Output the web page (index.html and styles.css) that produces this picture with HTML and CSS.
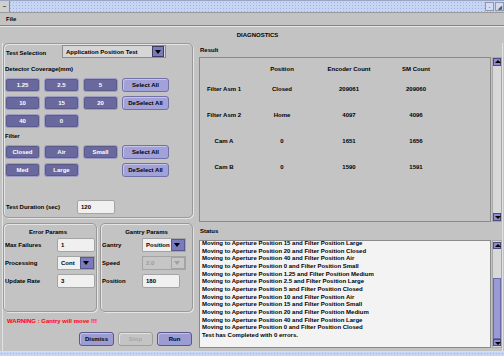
FILE: index.html
```html
<!DOCTYPE html>
<html lang="en">
<head>
  <meta charset="UTF-8">
  <title>Diagnostics</title>
  <link rel="stylesheet" href="styles.css">
</head>
<body>

  <div class="window">
    <div class="titlebar">
      <div class="tb-menu">–</div>
      <div class="tb-fill"></div>
      <div class="tb-btn">·</div>
      <div class="tb-btn">◢</div>
    </div>
    <div class="menubar"><span>File</span></div>
    <div class="heading">DIAGNOSTICS</div>

    <div class="main">
      <div class="left">
        <div class="panel tests">
          <div class="sel-row">
            <label>Test Selection</label>
            <div class="combo wide"><span>Application Position Test</span><i class="drop"></i></div>
          </div>

          <div class="group-title">Detector Coverage(mm)</div>
          <div class="btn-grid">
            <button class="btn">1.25</button>
            <button class="btn">2.5</button>
            <button class="btn">5</button>
            <button class="btn light">Select All</button>
            <button class="btn">10</button>
            <button class="btn">15</button>
            <button class="btn">20</button>
            <button class="btn light">DeSelect All</button>
            <button class="btn">40</button>
            <button class="btn">0</button>
          </div>

          <div class="group-title">Filter</div>
          <div class="btn-grid">
            <button class="btn">Closed</button>
            <button class="btn">Air</button>
            <button class="btn">Small</button>
            <button class="btn light">Select All</button>
            <button class="btn">Med</button>
            <button class="btn">Large</button>
            <button class="btn light col4">DeSelect All</button>
          </div>

          <div class="duration-row">
            <label>Test Duration (sec)</label>
            <input class="field" type="text" value="120">
          </div>
        </div>

        <div class="params-row">
          <div class="panel param-box error">
            <div class="param-title">Error Params</div>
            <div class="prow"><label>Max Failures</label><input class="field" type="text" value="1"></div>
            <div class="prow"><label>Processing</label><div class="combo small"><span>Cont</span><i class="drop"></i></div></div>
            <div class="prow"><label>Update Rate</label><input class="field" type="text" value="3"></div>
          </div>
          <div class="panel param-box gantry">
            <div class="param-title">Gantry Params</div>
            <div class="prow"><label>Gantry</label><div class="combo small"><span>Position</span><i class="drop"></i></div></div>
            <div class="prow"><label>Speed</label><div class="combo small disabled"><span>2.0</span><i class="drop"></i></div></div>
            <div class="prow"><label>Position</label><input class="field" type="text" value="180"></div>
          </div>
        </div>

        <div class="warning">WARNING : Gantry will move !!!</div>

        <div class="actions">
          <button class="btn action">Dismiss</button>
          <button class="btn action off">Stop</button>
          <button class="btn action">Run</button>
        </div>
      </div>

      <div class="right">
        <div class="section-title">Result</div>
        <div class="pane result-pane">
          <div class="table-view">
            <div class="trow head"><span></span><span>Position</span><span>Encoder Count</span><span>SM Count</span></div>
            <div class="trow"><span>Filter Asm 1</span><span>Closed</span><span>209061</span><span>209060</span></div>
            <div class="trow"><span>Filter Asm 2</span><span>Home</span><span>4097</span><span>4096</span></div>
            <div class="trow"><span>Cam A</span><span>0</span><span>1651</span><span>1656</span></div>
            <div class="trow"><span>Cam B</span><span>0</span><span>1590</span><span>1591</span></div>
          </div>
          <div class="vscroll">
            <div class="sarrow up"></div>
            <div class="sarrow down"></div>
          </div>
        </div>

        <div class="section-title status-title">Status</div>
        <div class="pane status-pane">
          <div class="log">
            <div class="log-lines">
              <div>Moving to Aperture Position 15 and Filter Position Large</div>
              <div>Moving to Aperture Position 20 and Filter Position Closed</div>
              <div>Moving to Aperture Position 40 and Filter Position Air</div>
              <div>Moving to Aperture Position 0 and Filter Position Small</div>
              <div>Moving to Aperture Position 1.25 and Filter Position Medium</div>
              <div>Moving to Aperture Position 2.5 and Filter Position Large</div>
              <div>Moving to Aperture Position 5 and Filter Position Closed</div>
              <div>Moving to Aperture Position 10 and Filter Position Air</div>
              <div>Moving to Aperture Position 15 and Filter Position Small</div>
              <div>Moving to Aperture Position 20 and Filter Position Medium</div>
              <div>Moving to Aperture Position 40 and Filter Position Large</div>
              <div>Moving to Aperture Position 0 and Filter Position Closed</div>
              <div>Test has Completed with 0 errors.</div>
            </div>
          </div>
          <div class="vscroll status-scroll">
            <div class="sarrow up"></div>
            <div class="thumb"></div>
            <div class="sarrow down"></div>
          </div>
        </div>
      </div>
    </div>

    <div class="footer"></div>
  </div>

</body>
</html>
```

FILE: styles.css
```css
* {
  box-sizing: border-box;
}

body {
  margin: 0;
  width: 504px;
  height: 356px;
  overflow: hidden;
  background: #c3c3c3;
  font-family: 'Liberation Sans', Arial, sans-serif;
  font-size: 6px;
  font-weight: bold;
  color: #000;
}

.window {
  display: flex;
  flex-direction: column;
  height: 356px;
}

/* window chrome */

.titlebar,
.footer {
  background-color: #c6d5f4;
  background-image: radial-gradient(circle, #a2b6e4 0.7px, transparent 0.9px);
  background-size: 3px 3px;
}

.titlebar {
  display: flex;
  height: 13px;
  border-top: 1px solid #9aa6c0;
  border-bottom: 1px solid #9a9a9a;
}

.tb-menu {
  width: 10px;
  background: #cfcfcf;
  border-right: 1px solid #8a8a8a;
  text-align: center;
  line-height: 10px;
}

.tb-fill {
  flex: 1;
}

.tb-btn {
  width: 9px;
  margin: 1px 0 1px 1px;
  background: #d4dcee;
  border: 1px solid #8c98b8;
  font-size: 5px;
  line-height: 8px;
  text-align: center;
  color: #555;
}

.menubar {
  height: 13px;
  padding: 1px 0 0 6px;
  line-height: 11px;
  border-bottom: 1px solid #858585;
}

.heading {
  height: 17px;
  padding: 1px 0 0 11px;
  line-height: 15px;
  text-align: center;
  border-top: 1px solid #e6e6e6;
}

.main {
  display: flex;
  gap: 6px;
  height: 308px;
  margin: 0 1px 0 2px;
  border-left: 1px solid #e2e2e2;
  border-right: 1px solid #e2e2e2;
}

.footer {
  height: 5px;
  border-top: 1px solid #dedede;
}

/* left side */

.left {
  width: 190px;
  display: flex;
  flex-direction: column;
}

.panel {
  border: 1px solid #999;
  border-radius: 5px;
  box-shadow: inset 1px 1px 0 #e4e4e4, 1px 1px 0 #e4e4e4;
}

.tests {
  padding: 0 1px 3px 1px;
}

.sel-row {
  display: flex;
  align-items: center;
  height: 13px;
  margin-top: 1px;
}

.sel-row label {
  width: 57px;
  padding: 2px 0 0 1px;
}

.group-title {
  margin-top: 6px;
  line-height: 10px;
}

.group-title + .btn-grid {
  margin-top: 4px;
}

.btn-grid + .group-title {
  margin-top: 3px;
}

.btn-grid {
  display: grid;
  grid-template-columns: 35px 35px 35px 47px;
  grid-auto-rows: 14px;
  gap: 4px;
}

.col4 {
  grid-column: 4;
}

.btn {
  font: inherit;
  padding: 0;
  margin: 0;
  background: #69699d;
  color: #fff;
  border: 1px solid #9d9dc6;
  border-radius: 3px;
  box-shadow: inset 0 0 0 1px #5a5a8c;
}

.btn.light {
  background: #a2a2d8;
  color: #000;
  border-color: #7171a8;
  box-shadow: inset 1px 1px 0 #c4c4ea;
}

.duration-row {
  display: flex;
  align-items: center;
  margin-top: 23px;
  height: 14px;
}

.duration-row label {
  width: 72px;
  padding-left: 1px;
}

.field {
  font: inherit;
  width: 38px;
  height: 14px;
  margin: 0;
  padding: 0 3px;
  background: #f0f0f0;
  border: 1px solid #a4a4a4;
  border-radius: 2px;
  color: #000;
  outline: none;
}

.combo {
  display: flex;
  align-items: center;
  height: 13px;
  padding-left: 3px;
  background: #d6d6d6;
  border: 1px solid #8c8c8c;
}

.combo span {
  flex: 1;
}

.drop {
  position: relative;
  width: 12px;
  height: 11px;
  margin-right: 1px;
  background: #7a7abc;
  border: 1px solid #3e3e62;
}

.drop::after {
  content: '';
  position: absolute;
  left: 2px;
  top: 3px;
  border-left: 3px solid transparent;
  border-right: 3px solid transparent;
  border-top: 4px solid #000;
}

.combo.wide {
  width: 104px;
}

.combo.small {
  width: 44px;
  height: 14px;
  background: #f0f0f0;
  border-color: #a4a4a4;
}

.combo.small .drop {
  width: 14px;
  height: 12px;
  margin-right: 0;
  border-color: #5a5a8a;
}

.error .combo.small {
  width: 38px;
}

.combo.disabled {
  background: #c6c6c6;
  color: #9c9c9c;
}

.combo.disabled .drop {
  background: #c6c6c6;
  border-color: #a4a4a4;
}

.combo.disabled .drop::after {
  border-top-color: #a0a0a0;
}

.params-row {
  display: flex;
  gap: 3px;
  margin-top: 5px;
}

.param-box {
  height: 89px;
  padding: 3px 1px 0;
}

.error {
  width: 94px;
}

.gantry {
  flex: 1;
}

.param-title {
  line-height: 10px;
  margin-bottom: 1px;
  text-align: center;
}

.error .param-title {
  padding-right: 4px;
}

.prow {
  display: flex;
  align-items: center;
  justify-content: space-between;
  height: 14px;
  margin-bottom: 4px;
}

.gantry .prow {
  justify-content: flex-start;
}

.gantry .prow label {
  width: 40px;
}

.warning {
  margin-top: 4px;
  padding-left: 4px;
  line-height: 10px;
  color: #f00;
}

.actions {
  display: flex;
  justify-content: flex-end;
  gap: 4px;
  margin-top: 6px;
  padding-right: 1px;
}

.btn.action {
  width: 35px;
  height: 14px;
  background: #9c9cd2;
  color: #000;
  border-color: #58588c;
  box-shadow: inset 1px 1px 0 #c0c0e8;
}

.btn.off {
  background: #c4c4c4;
  color: #a6a6a6;
  border-color: #9e9e9e;
  box-shadow: inset 1px 1px 0 #e2e2e2;
}

/* right side */

.right {
  flex: 1;
  display: flex;
  flex-direction: column;
}

.section-title {
  margin-top: 2px;
  line-height: 10px;
  padding-left: 1px;
}

.status-title {
  margin-top: 4px;
}

.pane {
  display: flex;
  margin-top: 2px;
}

.result-pane {
  height: 165px;
}

.status-pane {
  height: 108px;
  margin-top: 4px;
}

.table-view {
  flex: 1;
  padding-top: 6px;
  background: #c4c4c4;
  border: 1px solid #8a8a8a;
}

.trow {
  display: grid;
  grid-template-columns: 48px 68px 66px 68px;
  line-height: 10px;
  text-align: center;
  margin-bottom: 16px;
}

.trow.head {
  margin-bottom: 10px;
}

.vscroll {
  width: 10px;
  margin-left: 1px;
  display: flex;
  flex-direction: column;
  justify-content: space-between;
  background: #d8d8d8;
  border: 1px solid #a8a8a8;
}

.sarrow {
  position: relative;
  height: 8px;
  background: #8a8ace;
  border: 1px solid #4c4c7c;
}

.sarrow::after {
  content: '';
  position: absolute;
  left: 1px;
  border-left: 3px solid transparent;
  border-right: 3px solid transparent;
}

.sarrow.up::after {
  top: 1px;
  border-bottom: 3px solid #000;
}

.sarrow.down::after {
  top: 2px;
  border-top: 3px solid #000;
}

.status-scroll {
  justify-content: flex-start;
  padding: 1px 0;
}

.status-scroll .sarrow {
  height: 7px;
}

.thumb {
  height: 61px;
  margin-top: 29px;
  background: #9a9ad4;
  border: 1px solid #6a6aa6;
}

.status-scroll .down {
  margin-top: auto;
}

.log {
  flex: 1;
  overflow: hidden;
  padding-left: 2px;
  background: #f3f3f3;
  border: 1px solid #8a8a8a;
  line-height: 7.65px;
}

.log-lines {
  margin-top: -1px;
}
```
